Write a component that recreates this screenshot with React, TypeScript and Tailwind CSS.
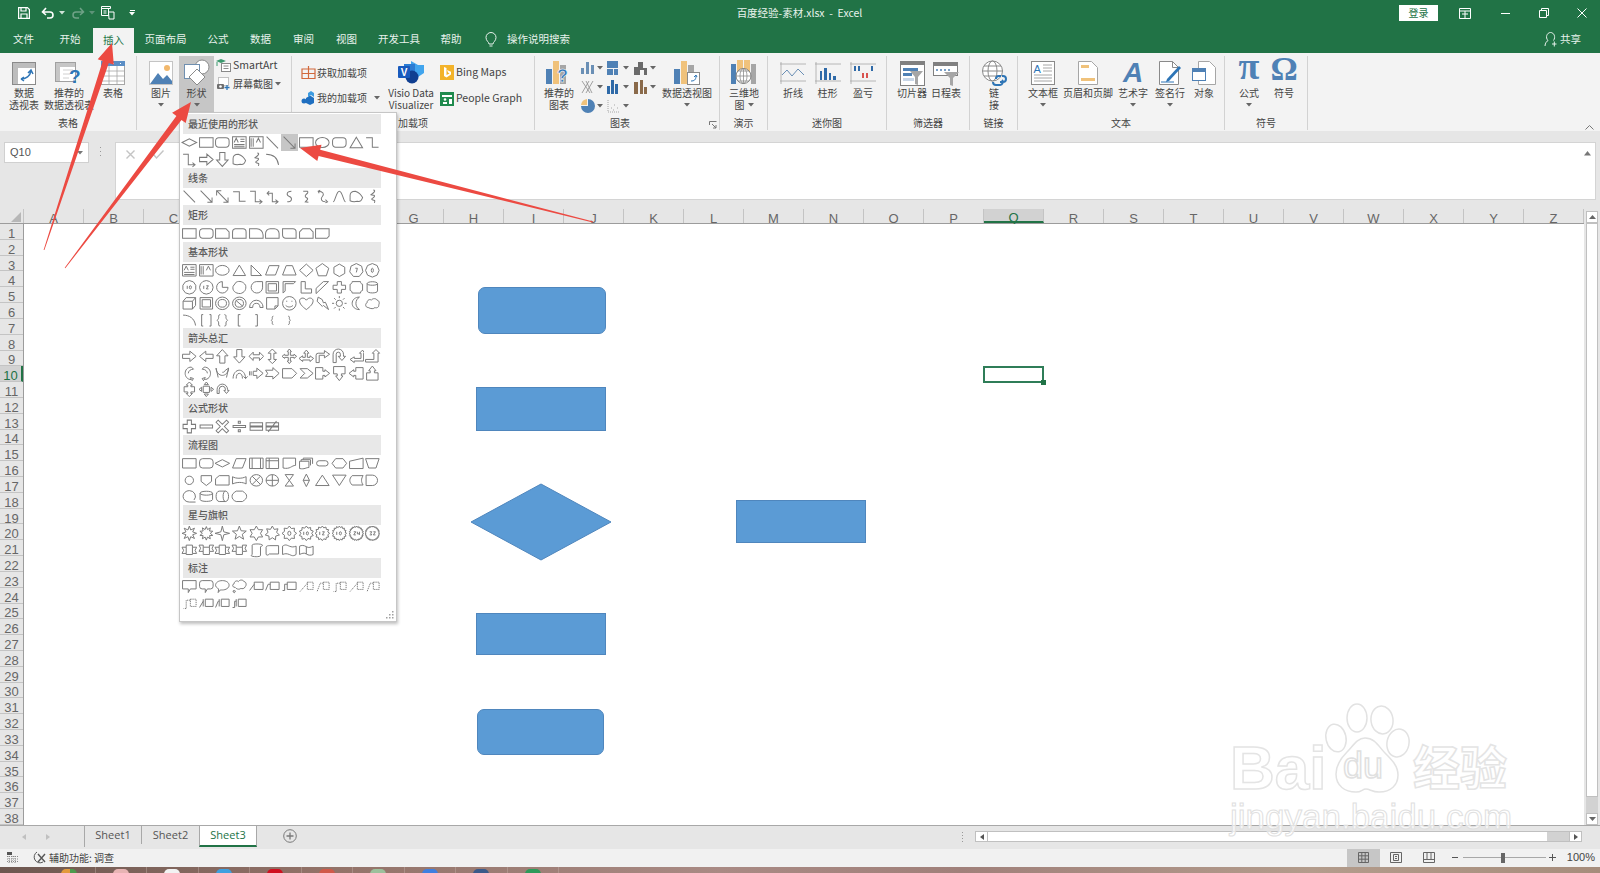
import React from 'react'

// ---- small helpers ----
const polar = (n: number, r1: number, r2: number) => {
  const pts: string[] = []
  const count = r1 === r2 ? n : n * 2
  for (let i = 0; i < count; i++) {
    const r = i % 2 === 0 ? r1 : r2
    const a = (i / count) * Math.PI * 2 - Math.PI / 2
    pts.push(`${(8 + Math.cos(a) * r).toFixed(2)} ${(8 + Math.sin(a) * r).toFixed(2)}`)
  }
  return 'M' + pts.join('L') + 'z'
}
const ring = 'M4 8a4 4 0 1 0 8 0a4 4 0 1 0-8 0z'

const P: Record<string, string> = {
  rect: 'M1.5 3.5h13v9h-13z',
  round: 'M4.5 3.5h7a3 3 0 0 1 3 3v3a3 3 0 0 1-3 3h-7a3 3 0 0 1-3-3v-3a3 3 0 0 1 3-3z',
  dia: 'M1 8l7-3.5L15 8l-7 3.5z',
  ell: 'M1.5 8a6.5 4.7 0 1 0 13 0a6.5 4.7 0 1 0-13 0z',
  tri: 'M8 3l6 10H2z',
  elbow: 'M2 3.5h6v9h6',
  elbowA: 'M2 3h5v10h6M11 11l2.5 2-2.5 2',
  elbowD: 'M3 5h5v8h5M11 11l2.5 2-2.5 2M5 3L3 5l2 2',
  line: 'M2.5 2.5l11 11',
  arrow: 'M2.5 2.5l11 11M13.5 9v4.5H9',
  dbl: 'M2.5 2.5l11 11M13.5 9v4.5H9M2.5 7V2.5H7',
  r: 'M1.5 6h7V3l6 5-6 5v-3h-7z',
  l: 'M14.5 6h-7V3l-6 5 6 5v-3h7z',
  u: 'M5.5 14.5v-7h-3L8 1.5l5.5 6h-3v7z',
  d: 'M5.5 1.5v7h-3l5.5 6 5.5-6h-3v-7z',
  lr: 'M1 8l4-4v2.5h6V4l4 4-4 4V9.500H5V12z',
  ud: 'M8 1l4 4H9.500v6H12l-4 4-4-4h2.500V5H4z',
  quad: 'M8 1l2 2.500H9V7h3.500V6L15 8l-2.500 2V9H9v3.500h1L8 15l-2-2.500h1V9H3.500v1L1 8l2.500-2v1H7V3.500H6z',
  lru: 'M8 2l2.500 3H9v4h2.500V7.500L15 10l-3.500 3v-1.500h-7V13L1 10l3.500-2.500V9H7V5H5.500z',
  bent: 'M2 14V7a2 2 0 0 1 2-2h6V2.500L15 6l-5 3.500V7H5v7z',
  uturn: 'M2 14V6a5 5 0 0 1 10 0v2h2l-3.500 4L7 8h2V6a2 2 0 0 0-4 0v8z',
  lu: 'M14 2l-3 3h1.500v5H6V8.500L2 11l4 3v-1.500h9V5H16z',
  bu: 'M1.500 11h8V5H8l3.500-3.500L15 5h-1.500v8.500h-12z',
  cr: 'M10 2C6 2 4 5 4 8s2 6 6 6l-1-2 3 1-2 3M10 2l2 2c-3 0-5 2-5 4',
  cl: 'M6 2c4 0 6 3 6 6s-2 6-6 6l1-2-3 1 2 3M6 2L4 4c3 0 5 2 5 4',
  cu: 'M2 3c0 4 3 7 6 7s6-3 6-7l-3 2c-1 2-2 2-3 2M2 3l2 9M14 3l-2 9',
  cd: 'M2 13c0-5 3-8 6-8s6 3 6 8l2-2M14 13l-2-2M5 13c0-3 1-5 3-5s3 2 3 5',
  str: 'M1.5 6v4M3 6v4M5 6h3.500V3l6 5-6 5v-3H5z',
  notch: 'M1.500 5h7V2.500l6 5.500-6 5.500V11h-7l2-3z',
  home: 'M1.500 3.500h9L15 8l-4.500 4.500h-9z',
  chev: 'M2 3.500h7L14.500 8 9 12.500H2L6.500 8z',
  cbr: 'M1.500 2.500h7v3.500h2V4.500L15 8l-4.500 3.500V10h-2v3.500h-7z',
  cbd: 'M2.500 1.500h11v7H10v2h1.500L8 15l-3.500-4.500H6v-2H2.500z',
  cbl: 'M14.500 2.500h-7v3.500h-2V4.500L1 8l4.500 3.500V10h2v3.500h7z',
  cbu: 'M2.500 14.500h11v-7H10v-2h1.500L8 1 4.500 5.500H6v2H2.500z',
  udc: 'M8 1l3 3H9.500v1.500H13v5H9.500V12H11l-3 3-3-3h1.500v-1.500H3v-5h3.500V4H5z',
  qc: 'M5 5h6v6H5zM8 1l2 2.500H6zM8 15l2-2.500H6zM1 8l2.500-2v4zM15 8l-2.500-2v4z',
  circ: 'M3 12V8a5 5 0 0 1 10 0v1h1.500L12 12 9.500 9H11V8a3 3 0 0 0-6 0v4z',
  plus: 'M6 2h4v4h4v4h-4v4H6v-4H2V6h4z',
  minus: 'M2 6.500h12v3H2z',
  times: 'M4 2l4 4 4-4 2 2-4 4 4 4-2 2-4-4-4 4-2-2 4-4-4-4z',
  div: 'M2 7h12v2H2zM7 3h2v2H7zM7 11h2v2H7z',
  eq: 'M2 4.500h12v3H2zM2 8.500h12v3H2z',
  neq: 'M2 4.500h12v3H2zM2 8.500h12v3H2zM4 13L12 3',
  tb: 'M1.500 2.500h13v11h-13zM3 8l2-4 2 4M9 5h4M9 7h4M3 10h10M3 12h10',
  vtb: 'M1.500 2.500h13v11h-13zM3 4v8M5 4v8M8 8l2-4 2 4',
  rtTri: 'M3 3l10 10H3z',
  para: 'M5 3.500h9.500L11 12.500H1.500z',
  trap: 'M5 3.500h6l3.500 9h-13z',
  ddia: 'M8 2l6.500 6L8 14 1.500 8z',
  pie: 'M8 2.500a5.500 5.500 0 1 0 5.500 5.500H8z',
  chord: 'M5 3c3-1.500 7-.5 9 3 1 4-1 7-5 8-5 0-8-3-7-7z',
  tear: 'M14 2.500H8a5.500 5.500 0 1 0 6 6z',
  frame: 'M2 2.500h12v11H2zM4 4.500h8v7H4z',
  hf: 'M2 2.500h12l-2 2H4v7l-2 2z',
  ls: 'M3 2.500h4v7h6v4H3z',
  diag: 'M2 9l7-6.500h5L2 14z',
  cross: 'M6 2.500h4V6h4v4h-4v3.500H6V10H2V6h4z',
  plaque: 'M4 2.500h8c0 1.500 1 2.500 2 2.500v6c-1 0-2 1-2 2.500H4c0-1.500-1-2.500-2-2.500V5c1 0 2-1 2-2.500z',
  can: 'M3 4.500c0-2.500 10-2.500 10 0v7c0 2.500-10 2.500-10 0zM3 4.500c0 2 10 2 10 0',
  cube: 'M2 6l3-3.500h9V10l-3 3.500H2zM2 6h9v7.500M11 6l3-3.500',
  bevel: 'M2 2.500h12v11H2zM4 4.500h8v7H4z',
  donut: 'M1.500 8a6.500 6 0 1 0 13 0a6.500 6 0 1 0-13 0zM4 8a4 3.700 0 1 0 8 0a4 3.700 0 1 0-8 0z',
  no: 'M1.500 8a6.500 6 0 1 0 13 0a6.500 6 0 1 0-13 0zM4 8a4 3.700 0 1 0 8 0a4 3.700 0 1 0-8 0zM4.500 5l7 6',
  arcB: 'M1.500 12a6.500 7 0 0 1 13 0h-3a3.500 4 0 0 0-7 0z',
  fold: 'M2.500 2.500h11v8l-3 3h-8zM10.500 13.500v-3h3',
  smile: 'M1.500 8a6.500 6.500 0 1 0 13 0a6.500 6.500 0 1 0-13 0zM5 6h1M10 6h1M4.500 10c2 2 5 2 7 0',
  heart: 'M8 14C4 11 1.500 8.500 1.500 5.500 1.500 3 5.500 1.500 8 5c2.500-3.500 6.500-2 6.500.5 0 3-2.500 5.500-6.500 8.500z',
  bolt: 'M4 2l4 2.500 1 3 2-.5 3 7-5-4-1 1-5-5z',
  sun: 'M5 8a3 3 0 1 0 6 0a3 3 0 1 0-6 0zM8 1v2M8 13v2M1 8h2M13 8h2M3 3l1.500 1.500M11.500 11.500L13 13M13 3l-1.500 1.500M3 13l1.500-1.500',
  moon: 'M11 2a7 7 0 0 0 0 12C7 14 4 11.500 4 8s3-6 7-6z',
  cloud: 'M4 12c-3 0-3-4-1-4.500C2.500 5 6 3.500 7 5c1-2 5-2 5.500 0 2.500 0 2.500 4 1.500 4.500 1 2-2 3.500-3.500 2.500-1 1.500-4 1.500-6.500 0z',
  arc: 'M2 3c6 0 11 3 12 10',
  bp: 'M5 2.500H3.500v11H5M11 2.500h1.500v11H11',
  bcp: 'M6 2.500c-2 0-1.500 2-1.500 3S3 8 3 8s1.500 1 1.500 2.500-.5 3 1.500 3M10 2.500c2 0 1.500 2 1.500 3S13 8 13 8s-1.500 1-1.500 2.500.5 3-1.500 3',
  lb: 'M9 2.500H7v11h2',
  rb: 'M7 2.500h2v11H7',
  lbc: 'M9 4c-1.500 0-1 2-1 2.500S7 8 7 8s1 .5 1 1.500S7.500 12 9 12',
  rbc: 'M7 4c1.500 0 1 2 1 2.500S9 8 9 8s-1 .5-1 1.500S8.500 12 7 12',
  sc: 'M10 3C5 3 5 7 8 8s3 5-2 5',
  scA: 'M5 3h4c2 2-3 3-2 5s3 1 2 3l-2 2M9 11l-2 2 3 .5',
  scD: 'M5 5L4 3l2-1M4 3c5 0 6 3 4 5s-1 5 3 5M11 11l2 2-2 1',
  bump: 'M2 13c2 0 3-10 6-10s4 10 6 10',
  free: 'M2 12V7c0-3 2-4 5-4 3 1 5 2 7 6-1 3-3 4-5 3.500-2 .5-5 .5-7-.5z',
  scrib: 'M9 2c3 0 0 3-2 4s4 0 3 2-4 2-2 3 3 0 2 3',
  s1: 'M1.500 3.500h10l3 3v6h-13z',
  s2: 'M4 3.500h7.500a3 3 0 0 1 3 3v6h-13v-6a3 3 0 0 1 2.500-3z',
  s3: 'M1.500 3.500h7a6 6 0 0 1 6 6v3h-13z',
  s4: 'M6 3.500h4a4.500 4.500 0 0 1 4.500 4.500v4.500h-13V8A4.500 4.500 0 0 1 6 3.500z',
  s5: 'M1.500 3.500h10a3 3 0 0 1 3 3v6h-10a3 3 0 0 1-3-3z',
  s6: 'M4.500 3.500h7l3 3v6h-13v-6z',
  s7: 'M1.500 3.500h13v7l-2 2h-11z',
  fPre: 'M1.500 3h13v10h-13zM4 3v10M12 3v10',
  fInt: 'M2 3h12v10H2zM5 3v10M2 5.500h12',
  fDoc: 'M2 3h12v7c-4 0-5 4-12 2.500z',
  fMul: 'M1.500 6h9v6c-3 0-4 2-9 1zM3 6V4.500h9V10M5 4.500V3h9v5.500',
  fTerm: 'M5 5.500h6a2.500 2.500 0 0 1 0 5H5a2.500 2.500 0 0 1 0-5z',
  fPrep: 'M4.500 3.500h7L15 8l-3.500 4.500h-7L1 8z',
  fManI: 'M1.500 6l13-3v10h-13z',
  fManO: 'M1.500 3.500h13l-3 9h-7z',
  fConn: ring,
  fOff: 'M3 3.500h10v5.500L8 13 3 9z',
  fCard: 'M5 3.500h9.500v9h-13v-6z',
  fTape: 'M1.500 4.500c3 2 9 2 13 0v7c-3-2-9-2-13 0z',
  fSum: 'M2 8a6 5.500 0 1 0 12 0a6 5.500 0 1 0-12 0zM4 4l8 8M12 4l-8 8',
  fOr: 'M2 8a6 5.500 0 1 0 12 0a6 5.500 0 1 0-12 0zM8 2.500v11M2 8h12',
  fCol: 'M4 2.500h8L4 13.500h8z',
  fSort: 'M8 2l3 6-3 6-3-6zM5 8h6',
  fExt: 'M8 3l6.500 10h-13z',
  fMrg: 'M1.500 3h13L8 13z',
  fStore: 'M4 3.500h10.500c-2 3-2 6 0 9H4c-3-3-3-6 0-9z',
  fDelay: 'M2 3h6a5 5 0 0 1 0 10H2z',
  fSeq: 'M8 2.500a6 5.500 0 1 0 0 11h6M8 2.500a6 5.500 0 0 1 4.500 9',
  fMag: 'M2 5c0-2.500 12-2.500 12 0v6c0 2.500-12 2.500-12 0zM2 5c0 2.500 12 2.500 12 0',
  fDir: 'M5 3c-4 0-4 10 0 10h6c4 0 4-10 0-10zM11 3c-3 0-3 10 0 10',
  fDisp: 'M5 3h6c3 2 4 3 4 5s-1 3-4 5H5C2 12 1 10 1 8s1-3 4-5z',
  rib1: 'M1 5h4V3h6v2h4l-1.500 3L15 11h-4v1H5v-1H1l1.500-3zM5 5v6M11 5v6',
  rib2: 'M1 3h4v2h6V3h4l-1.500 3L15 9h-4v3H5V9H1l1.500-3zM5 5v4M11 5v4',
  scrollV: 'M4 3c0-1.500 9-1.500 10 0 0 1-2 1.500-2 1.500V13c0 1.500-8 1.500-9 0 0-.5 1-1 1-1z',
  scrollH: 'M2 5c0-1.500 3-1.500 3-1.500h9v8H5c-1 1.500-3 1.500-3 0z',
  wave: 'M1.500 4c3-2 4-1 6.500 0s4 1 6.500 0v8c-3 2-4 1-6.500 0s-4-1-6.500 0z',
  wave2: 'M1.500 4c2-1 4-1 6.500.5S12.500 5 14.500 4v8c-2 1-4.500 1-6.500-.5s-4.500-.5-6.500.5zM8 4.500v7',
  cR: 'M1.500 2.500h13v8H9L7 14v-3.500H1.500z',
  cRo: 'M4 2.500h8a2.500 2.500 0 0 1 2.500 2.500v3a2.500 2.500 0 0 1-2.500 2.500H9L7 14v-3.500H4A2.500 2.500 0 0 1 1.500 8V5A2.500 2.500 0 0 1 4 2.500z',
  cO: 'M8 2.500c4 0 6.500 2 6.500 4.500s-3 4.500-6.500 4.500c-1 0-1 0-2 0L4 14l.500-3.500C2.500 9.500 1.500 8 1.500 7c0-2.500 2.500-4.500 6.500-4.500z',
  cC: 'M4 9c-3 0-3-3-1-3.500C3 3 6 2 7 3.500c1-2 5-2 5.500 0 2.500 0 2.500 4 1 5-.5 2-3 2-4 1.500-1 1-3 1-4.500 0zM3 12a1 1 0 1 0 .1 0z',
  cL1: 'M6 4h8.500v7H6zM6 6L1.500 12',
  cL2: 'M6 4h8.500v7H6zM6 6H4L1.500 12',
  cL3: 'M6 4h8.500v7H6zM6 6H3.500v6H1.500',
  cD1: 'M9 4h5.500v7H9zM9 5L2 13',
  cD2: 'M9 4h5.500v7H9zM9 5H6l-3 8',
  cD3: 'M9 4h5.500v7H9zM9 5H5v8H2.500',
  bA1: 'M7 4h7.500v7H7zM5 4v7M5 6L1.500 12',
  bA2: 'M7 4h7.500v7H7zM5 4v7M5 6H4L1.500 12',
  bA3: 'M7 4h7.500v7H7zM5 4v7M5 6H3.500v6H1.500',
}

const dashed = new Set(['cD1', 'cD2', 'cD3'])

const star = (n: number, r1: number, r2: number) => polar(n, r1, r2)
const extra: Record<string, string> = {
  p5: polar(5, 6.5, 6.5),
  h6: polar(6, 6, 6),
  o7: polar(7, 6.5, 6.5) + 'M7 6h2l-1 4',
  o8: polar(8, 6.5, 6.5) + 'M7 8a1 2 0 1 0 2 0a1 2 0 1 0-2 0',
  o10: polar(10, 6.5, 6.5) + 'M6 6.500v3M8 8a1 1.500 0 1 0 2 0a1 1.500 0 1 0-2 0',
  o12: polar(12, 6.5, 6.5) + 'M5.500 6.500v3M8 6.500h2l-2 3h2',
  st4x: star(8, 7, 3.5),
  st4y: star(10, 6.5, 3.8),
  st4: star(4, 7, 2),
  st5: star(5, 7, 3),
  st6: star(6, 7, 4),
  st7: star(7, 7, 4.2),
  st8: star(8, 7, 5) + 'M6.500 8a1.500 2 0 1 0 3 0a1.500 2 0 1 0-3 0',
  st10: star(10, 7, 5.2) + 'M5.500 6.500v3M8 8a1 1.500 0 1 0 2 0a1 1.500 0 1 0-2 0',
  st12: star(12, 7, 5.4) + 'M5.500 6.500v3M8 6.500h2l-2 3h2',
  st16: star(16, 7, 5.6) + 'M5.500 6.500v3M8 8a1 1.500 0 1 0 2 0a1 1.500 0 1 0-2 0',
  st24: star(24, 7, 5.8) + 'M5.500 6.500h2l-2 3h2M9 6.500v2h2M11 6.500v3',
  st32: star(32, 7, 6) + 'M5.500 6.500h2l-1 1.500 1 1.500h-2M9 6.500h2l-2 3h2',
}
Object.assign(P, extra)

function ShapeIcon({ name }: { name: string }) {
  return (
    <svg viewBox="0 0 16 16" className="h-full w-full" fill="none" preserveAspectRatio="none">
      <path
        d={P[name]}
        stroke="#7a7a7a"
        strokeWidth="0.95"
        strokeDasharray={dashed.has(name) ? '1.2 0.8' : undefined}
      />
    </svg>
  )
}

function ShapeSection({ title, rows, cls, active }: { title: string; rows: string; cls: string; active?: number }) {
  return (
    <div className={`flex flex-col ${cls}`}>
      <div className="ml-[3px] flex h-5 w-[198px] shrink-0 items-center bg-[#e8e8e8] pl-[5px] text-[10px] leading-none font-medium text-[#5a5a5a]">
        {title}
      </div>
      <div className="ml-px grid flex-1 auto-rows-fr grid-cols-[repeat(12,16.67px)]">
        {rows.split(' ').map((name, i) => (
          <div key={i} className={i === active ? 'bg-[#c6c6c6]' : ''}>
            <ShapeIcon name={name} />
          </div>
        ))}
      </div>
    </div>
  )
}

function Caret({ color = '#666' }: { color?: string }) {
  return (
    <svg width="6" height="4" viewBox="0 0 6 4" className="shrink-0">
      <path d="M0 0h6L3 3.500z" fill={color} />
    </svg>
  )
}

// ---- ribbon icons ----
function IcoPivot() {
  return (
    <svg width="26" height="25" viewBox="0 0 26 25">
      <rect x="1.500" y="1.500" width="23" height="22" fill="#fff" stroke="#8a8a8a" />
      <rect x="2" y="2" width="22" height="5" fill="#bdbdbd" />
      <rect x="2" y="7" width="5" height="16" fill="#bdbdbd" />
      <path d="M10 18c5 0 9-3 10-8M17 12l3-3 2 4M10 18l3-2M10 18l3 2" stroke="#2e75b6" strokeWidth="1.500" fill="none" />
    </svg>
  )
}
function IcoRecPivot() {
  return (
    <svg width="30" height="25" viewBox="0 0 30 25">
      <rect x="1.500" y="1.500" width="20" height="19" fill="#fff" stroke="#a0a0a0" />
      <rect x="2" y="2" width="19" height="4" fill="#c6c6c6" />
      <rect x="2" y="6" width="4" height="14" fill="#c6c6c6" />
      <path d="M9 9h10M9 13h7M9 17h6" stroke="#d0d0d0" />
      <text x="15" y="22" fontFamily="Liberation Sans" fontWeight="700" fontSize="19" fill="#2e75b6">?</text>
    </svg>
  )
}
function IcoTable() {
  return (
    <svg width="24" height="25" viewBox="0 0 24 25">
      <rect x="0.500" y="0.500" width="23" height="23" fill="#fff" stroke="#a6a6a6" />
      <rect x="0" y="0" width="24" height="5" fill="#5b8ec5" />
      <path d="M0 10h24M0 15h24M0 20h24M8 5v19M16 5v19" stroke="#a6a6a6" strokeWidth="0.800" />
      <path d="M5 2.500h1M12 2.500h1M19 2.500h1" stroke="#fff" />
    </svg>
  )
}
function IcoPicture() {
  return (
    <svg width="24" height="24" viewBox="0 0 24 24">
      <rect x="0.500" y="0.500" width="23" height="23" fill="#fff" stroke="#c4c4c4" />
      <circle cx="18" cy="7" r="3" fill="#f2b86c" />
      <path d="M1 23l8-11 5 6 4-4 5 6v3z" fill="#4f81b5" />
    </svg>
  )
}
function IcoShapes() {
  return (
    <svg width="28" height="28" viewBox="0 0 28 28">
      <circle cx="19" cy="8" r="7" fill="#fff" stroke="#8a8a8a" />
      <rect x="1.500" y="5.500" width="15" height="14" fill="#fff" stroke="#6f8fb0" />
      <path d="M14 10l8 8-8 8-8-8z" fill="#fff" stroke="#8a8a8a" />
    </svg>
  )
}
function IcoSmartArt() {
  return (
    <svg width="15" height="15" viewBox="0 0 15 15">
      <path d="M0 3l5-2 5 2-5 2z" fill="#3c9a6f" />
      <path d="M1 4v4" stroke="#3c9a6f" />
      <rect x="5.500" y="5.500" width="9" height="8" fill="#fff" stroke="#8a8a8a" />
      <path d="M7.500 8h5M7.500 10.500h5" stroke="#8a8a8a" />
    </svg>
  )
}
function IcoShot() {
  return (
    <svg width="15" height="15" viewBox="0 0 15 15">
      <rect x="2.500" y="1.500" width="10" height="8" fill="#fff" stroke="#8a8a8a" strokeDasharray="1 1" />
      <rect x="1" y="8" width="7" height="5" rx="1" fill="#6e6e6e" />
      <circle cx="4.500" cy="10.500" r="1.300" fill="#fff" />
      <path d="M11 9v5M8.500 11.500h5" stroke="#2e75b6" strokeWidth="1.300" />
    </svg>
  )
}
function IcoGetAddin() {
  return (
    <svg width="15" height="15" viewBox="0 0 15 15" fill="none" stroke="#d2693c" strokeWidth="1.200">
      <path d="M1 4h13v9.500H1zM1 8.500h13M7.500 1v12.500" />
    </svg>
  )
}
function IcoMyAddin() {
  return (
    <svg width="15" height="15" viewBox="0 0 15 15">
      <path d="M5 8l4-2.500 4 2.500v5l-4 2-4-2z" fill="#1f6fc0" />
      <path d="M7 3l3-2 3 2v4l-3-2-3 2z" fill="#3d9be0" />
      <circle cx="3" cy="11" r="2.500" fill="#1f6fc0" />
    </svg>
  )
}
function IcoVisio() {
  return (
    <svg width="26" height="24" viewBox="0 0 26 24">
      <path d="M13 0l7 4 6 0v8l-6 4-7-4z" fill="#41a5ee" />
      <path d="M6 3h11v14H6z" fill="#2b7cd3" />
      <circle cx="14" cy="16" r="6.500" fill="#103f91" />
      <rect x="0" y="5" width="12" height="12" rx="1" fill="#185abd" />
      <text x="6" y="15" textAnchor="middle" fontFamily="Liberation Sans" fontWeight="700" fontSize="10" fill="#fff">V</text>
    </svg>
  )
}
function IcoBing() {
  return (
    <svg width="14" height="15" viewBox="0 0 14 15">
      <rect width="14" height="15" fill="#f3b32a" />
      <path d="M4 2l2.500 1v7l3-1.500-1.500-1L7 5l4 1.800v2.700L6.500 12.500 4 11z" fill="#fff" />
    </svg>
  )
}
function IcoPeople() {
  return (
    <svg width="14" height="14" viewBox="0 0 14 14">
      <rect width="14" height="14" fill="#1f8a4d" />
      <path d="M2 3h10v2H2z" fill="#fff" />
      <circle cx="5" cy="7.500" r="1.300" fill="#fff" />
      <path d="M3 12V10h4v2zM9 7h3v5H9z" fill="#fff" />
    </svg>
  )
}
function IcoRecChart() {
  return (
    <svg width="26" height="26" viewBox="0 0 26 26">
      <rect x="0" y="9" width="6" height="15" fill="#4f81b5" />
      <rect x="7" y="1" width="6" height="23" fill="#f0c27b" />
      <rect x="14" y="5" width="6" height="19" fill="#a6a6a6" />
      <text x="11" y="22" fontFamily="Liberation Sans" fontWeight="700" fontSize="18" fill="#2e75b6" stroke="#fff" strokeWidth="0.500">?</text>
    </svg>
  )
}
function IcoPivotChart() {
  return (
    <svg width="26" height="26" viewBox="0 0 26 26">
      <rect x="0" y="9" width="6" height="15" fill="#4f81b5" />
      <rect x="7" y="1" width="6" height="23" fill="#f0c27b" />
      <rect x="14" y="5" width="6" height="19" fill="#a6a6a6" />
      <rect x="13.500" y="12.500" width="12" height="12" fill="#fff" stroke="#8a8a8a" />
      <path d="M17 21c3 0 5-1 5-5M20 17l2-2 1 2" stroke="#2e75b6" fill="none" />
    </svg>
  )
}
function Ico3D() {
  return (
    <svg width="26" height="26" viewBox="0 0 26 26">
      <rect x="0" y="4" width="5" height="20" fill="#4f81b5" />
      <rect x="6" y="0" width="6" height="14" fill="#f0c27b" />
      <rect x="13" y="0" width="6" height="14" fill="#f0c27b" />
      <rect x="20" y="4" width="5" height="20" fill="#a6a6a6" />
      <circle cx="12.500" cy="16" r="7.500" fill="#fff" stroke="#808080" />
      <path d="M5 16h15M12.500 8.500v15M7 11h11M7 21h11" stroke="#808080" strokeWidth="0.700" />
      <ellipse cx="12.500" cy="16" rx="3.500" ry="7.500" fill="none" stroke="#808080" strokeWidth="0.700" />
    </svg>
  )
}
function IcoSpark({ kind }: { kind: 'line' | 'col' | 'win' }) {
  return (
    <svg width="26" height="22" viewBox="0 0 26 22">
      <path d="M1 0v22M0 2h26M0 19h26" stroke="#a6a6a6" strokeWidth="0.800" />
      {kind === 'line' && <path d="M2 13l5-5 5 6 6-7 6 6" stroke="#6a8fb5" fill="none" />}
      {kind === 'col' && <path d="M5 18V9h2v9zM9 18V6h3v12zM14 18v-7h2v7zM18 18v-4h3v4z" fill="#2f6aa8" />}
      {kind === 'win' && (
        <>
          <path d="M4 4h2v5H4zM8 4h2v5H8zM21 4h2v5h-2z" fill="#2f6aa8" />
          <path d="M12 11h2v5h-2zM16 11h2v5h-2z" fill="#d9534f" />
        </>
      )}
    </svg>
  )
}
function IcoSlicer() {
  return (
    <svg width="25" height="25" viewBox="0 0 25 25">
      <rect x="0.500" y="0.500" width="24" height="24" fill="#fff" stroke="#808080" />
      <rect x="0" y="0" width="25" height="4" fill="#808080" />
      <rect x="3" y="7" width="15" height="3" fill="#4f81b5" />
      <rect x="3" y="12" width="9" height="3" fill="#4f81b5" />
      <rect x="3" y="17" width="11" height="3" fill="#c9d7e8" />
      <path d="M10 10h13l-5 6v8l-3-1v-7z" fill="#a6a6a6" />
    </svg>
  )
}
function IcoTimeline() {
  return (
    <svg width="27" height="25" viewBox="0 0 27 25">
      <rect x="0.500" y="1.500" width="24" height="13" fill="#fff" stroke="#808080" />
      <rect x="0" y="1" width="25" height="4" fill="#808080" />
      <path d="M3 9h2M7 9h2M11 9h2M15 9h2" stroke="#4f81b5" strokeWidth="1.500" />
      <path d="M11 11h15l-6 6v8l-3-1v-7z" fill="#a6a6a6" />
    </svg>
  )
}
function IcoLink() {
  return (
    <svg width="26" height="27" viewBox="0 0 26 27">
      <circle cx="11.500" cy="11" r="10" fill="#fff" stroke="#8a8a8a" />
      <ellipse cx="11.500" cy="11" rx="4.500" ry="10" fill="none" stroke="#8a8a8a" />
      <path d="M1.500 11h20M3 6h17M3 16h17" stroke="#8a8a8a" />
      <path d="M15 19a3 3 0 0 1 3-3h2M21 16h1a3 3 0 0 1 0 6h-3M12 22a3 3 0 0 0 3 3h4a3 3 0 0 0 2-5" stroke="#2e75b6" strokeWidth="2" fill="none" />
    </svg>
  )
}
function IcoTextbox() {
  return (
    <svg width="24" height="24" viewBox="0 0 24 24">
      <rect x="0.500" y="0.500" width="23" height="23" fill="#fff" stroke="#8a8a8a" />
      <text x="2.500" y="12" fontFamily="Liberation Sans" fontSize="11" fill="#2e75b6">A</text>
      <path d="M12 4h9M12 7h9M12 10h9M3 14h18M3 17h18M3 20h18" stroke="#a6a6a6" />
    </svg>
  )
}
function IcoHeader() {
  return (
    <svg width="20" height="24" viewBox="0 0 20 24">
      <path d="M.5.5h13l6 6v17H.5z" fill="#fff" stroke="#a6a6a6" />
      <rect x="3" y="4" width="8" height="3" fill="#f0c27b" />
      <rect x="3" y="17" width="14" height="3" fill="#f0c27b" />
    </svg>
  )
}
function IcoWordArt() {
  return (
    <div className="flex h-6 w-6 items-center justify-center font-['Liberation_Sans',sans-serif] text-[28px] leading-6 font-bold text-[#4f81b5] italic">
      A
    </div>
  )
}
function IcoSign() {
  return (
    <svg width="24" height="25" viewBox="0 0 24 25">
      <path d="M1.500.5h13l6 6v17h-19z" fill="#fff" stroke="#8a8a8a" />
      <path d="M14.500.5v6h6" fill="none" stroke="#8a8a8a" />
      <path d="M9 18L21 5l2 2-12 13-3 1z" fill="#2e75b6" />
      <path d="M3 21h13" stroke="#2e75b6" />
    </svg>
  )
}
function IcoObject() {
  return (
    <svg width="24" height="24" viewBox="0 0 24 24">
      <path d="M6.500.5h11l6 6v17h-17z" fill="#fff" stroke="#a6a6a6" />
      <rect x="0.500" y="7.500" width="13" height="12" fill="#fff" stroke="#4f81b5" />
      <rect x="0" y="7" width="14" height="4" fill="#4f81b5" />
    </svg>
  )
}
function MiniChart({ kind }: { kind: number }) {
  const parts: Record<number, React.ReactNode> = {
    0: <path d="M0 13V7h3v6zM5 13V1h3v12zM10 13V4h3v9z" fill="#6a8fb5" />,
    1: <path d="M0 0h11v7H0z M0 8h6v6H0z M7 8h4v6H7z" fill="#4f81b5" />,
    2: <path d="M0 14V6h4V1h5v6h4v7h-3V9H6v5z" fill="#6a6a6a" />,
    3: <path d="M1 1l8 12M8 1L1 13M5 1l6 12M12 1L5 13" stroke="#8a8a8a" fill="none" strokeWidth="0.800" />,
    4: <path d="M0 14V6h3v8zM4 14V0h3v14zM8 14V4h3v10z" fill="#2f6aa8" />,
    5: <path d="M0 14V2h4v12zM6 14V0h3v14zM10 14V7h3v7z" fill="#8a6a4a" />,
    6: <path d="M7 0a7 7 0 1 1-7 7h7z" fill="#4f81b5" />,
    7: <path d="M1 1v12h12M4 9h1M7 6h1M10 9h1M6 11h1" stroke="#a6a6a6" fill="none" strokeDasharray="1 1" />,
  }
  return (
    <svg width="14" height="14" viewBox="0 0 14 14" className="shrink-0">
      {kind === 6 && <path d="M6 6V0a7 7 0 0 0-6 6z" fill="#f0c27b" />}
      {parts[kind]}
    </svg>
  )
}

function RibbonBtn({
  width,
  icon,
  lines,
  caret,
  active,
  inlineCaret,
}: {
  width: string
  icon: React.ReactNode
  lines: string[]
  caret?: boolean
  active?: boolean
  inlineCaret?: boolean
}) {
  return (
    <div className={`flex h-[57px] shrink-0 flex-col items-center pt-[3px] ${width} ${active ? 'bg-[#c6c6c6]' : ''}`}>
      <div className="flex h-[28px] items-center justify-center">{icon}</div>
      {lines.map((t, i) => (
        <div key={i} className="flex h-3 items-center gap-[3px] leading-3 whitespace-nowrap">
          {t}
          {inlineCaret && i === lines.length - 1 && <Caret />}
        </div>
      ))}
      {caret && (
        <div className="flex h-3 items-center">
          <Caret />
        </div>
      )}
    </div>
  )
}

function Group({
  width,
  label,
  children,
  pad,
  labelCls,
  launcher,
}: {
  width: string
  label: string
  children: React.ReactNode
  pad?: string
  labelCls?: string
  launcher?: boolean
}) {
  return (
    <div className={`relative flex h-[74px] shrink-0 flex-col border-r border-[#d2d2d2] ${width}`}>
      <div className={`flex h-[57px] ${pad ?? ''}`}>{children}</div>
      <div className={`mt-1 text-center leading-3 ${labelCls ?? ''}`}>{label}</div>
      {launcher && (
        <svg width="8" height="8" viewBox="0 0 8 8" fill="none" stroke="#777" className="absolute right-[2px] bottom-[1px]">
          <path d="M.5 4V.5H7.500M3 3l4 4M7 4v3H4" />
        </svg>
      )}
    </div>
  )
}

const tabs = [
  ['文件', 'w-[47px]'],
  ['开始', 'w-[46px]'],
  ['插入', 'w-[41px]'],
  ['页面布局', 'w-[63px]'],
  ['公式', 'w-[42px]'],
  ['数据', 'w-[43px]'],
  ['审阅', 'w-[43px]'],
  ['视图', 'w-[43px]'],
  ['开发工具', 'w-[62px]'],
  ['帮助', 'w-[42px]'],
]

const columns = 'ABCDEFGHIJKLMNOPQRSTUVWXYZ'.split('')
const rowNums = Array.from({ length: 38 }, (_, i) => i + 1)

const taskIcons = [
  'linear-gradient(90deg,#e39a3c 55%,#4c9a4c 55%)',
  '#e8b4b4',
  '#f2f2f2',
  '#3fa0e0',
  '#d01020',
  '#d05a4a',
  '#9cc09c',
  '#3f7fe0',
  '#3b5a8a',
  '#2d9a5a',
]

function arrowPoints(tx: number, ty: number, hx: number, hy: number) {
  const len = Math.hypot(hx - tx, hy - ty)
  const ux = (hx - tx) / len
  const uy = (hy - ty) / len
  const nx = -uy
  const ny = ux
  const bx = hx - ux * 20
  const by = hy - uy * 20
  const pts = [
    [tx + nx * 0.4, ty + ny * 0.4],
    [bx + nx * 3.2, by + ny * 3.2],
    [bx + nx * 8.5, by + ny * 8.5],
    [hx, hy],
    [bx - nx * 8.5, by - ny * 8.5],
    [bx - nx * 3.2, by - ny * 3.2],
    [tx - nx * 0.4, ty - ny * 0.4],
  ]
  return pts.map((p) => `${p[0].toFixed(1)},${p[1].toFixed(1)}`).join(' ')
}

export default function App() {
  return (
    <div className="relative flex h-[873px] w-[1600px] flex-col overflow-hidden bg-[#e6e6e6] font-['Noto_Sans_CJK_SC',sans-serif] text-[10px] text-[#444]">
      {/* Title bar */}
      <div className="relative flex h-[26px] shrink-0 items-center bg-[#217346] text-[#e8f2ec]">
        <div className="flex w-[145px] items-center pl-[18px]">
          <svg width="12" height="12" viewBox="0 0 12 12" fill="none" stroke="#fff" strokeWidth="1.200">
            <path d="M.6.6h8.800l2 2v8.800H.6zM3 .6v3.400h5V.6M3 11.400V7h6v4.400" />
          </svg>
          <svg width="14" height="12" viewBox="0 0 14 12" className="ml-[11px]" fill="none" stroke="#fff" strokeWidth="1.600">
            <path d="M2 5h7a3 3 0 0 1 0 6H6M5 1L1.500 5 5 8" />
          </svg>
          <div className="ml-1">
            <Caret color="#cfe3d7" />
          </div>
          <svg width="14" height="12" viewBox="0 0 14 12" className="ml-[6px]" fill="none" stroke="#6fa287" strokeWidth="1.500">
            <path d="M12 5H5a3 3 0 0 0 0 6h3M9 1l3.500 4L9 8" />
          </svg>
          <div className="ml-1">
            <Caret color="#5d9378" />
          </div>
          <svg width="14" height="14" viewBox="0 0 14 14" className="ml-[6px]" fill="none" stroke="#fff" strokeWidth="1">
            <path d="M.5.5h9v2h-9zM.5 2.500h7v7h-7zM2.500 5h3M2.500 7h3M7.500 6h5.500v7h-5z" />
          </svg>
          <div className="ml-[14px] flex flex-col items-center gap-px">
            <div className="h-px w-[5px] bg-white" />
            <Caret color="#fff" />
          </div>
        </div>
        <div className="flex-1 pr-[3px] text-center text-[10.500px] leading-none">
          <span className="ml-[58px]">百度经验-素材.xlsx&nbsp;&nbsp;-&nbsp;&nbsp;Excel</span>
        </div>
        <div className="flex items-center pr-[13px]">
          <div className="flex h-4 w-[39px] items-center justify-center bg-white text-[10px] leading-none text-[#217346]">登录</div>
          <svg width="12" height="11" viewBox="0 0 12 11" className="ml-[21px]" fill="none" stroke="#fff">
            <path d="M.5.5h11v10H.5zM.5 3h11M6 3v7.500M3 6h6" />
          </svg>
          <div className="ml-[30px] h-px w-[9px] bg-white" />
          <svg width="10" height="10" viewBox="0 0 10 10" className="ml-[29px]" fill="none" stroke="#fff">
            <path d="M.5 2.500h7v7h-7zM2.500 2.500v-2h7v7h-2" />
          </svg>
          <svg width="10" height="10" viewBox="0 0 10 10" className="ml-[28px]" fill="none" stroke="#fff">
            <path d="M.5.5l9 9M9.500.5l-9 9" />
          </svg>
        </div>
      </div>

      {/* Tabs */}
      <div className="flex h-[27px] shrink-0 items-end bg-[#217346] text-[10.500px] text-[#e8f2ec]">
        {tabs.map(([t, w]) => (
          <div
            key={t}
            className={`flex items-center justify-center leading-none ${w} ${
              t === '插入' ? 'h-[25px] bg-[#f3f3f3] text-[#217346]' : 'h-[27px]'
            }`}
          >
            {t}
          </div>
        ))}
        <div className="flex h-[27px] items-center pl-[13px]">
          <svg width="12" height="16" viewBox="0 0 12 16" fill="none" stroke="#e8f2ec">
            <path d="M4 12c0-2-3-3-3-6.500a5 5 0 0 1 10 0C11 9 8 10 8 12zM4.500 14h3" />
          </svg>
          <span className="ml-[10px] leading-none">操作说明搜索</span>
        </div>
        <div className="flex h-[27px] flex-1 items-center justify-end pr-[19px]">
          <svg width="13" height="15" viewBox="0 0 13 15" fill="none" stroke="#e8f2ec">
            <path d="M1 14c0-3 2-5 3-5.500-3-3-1-8 2.500-8S12 5 9.500 8.500M8 12h4.500M10.300 9.500v5" />
          </svg>
          <span className="ml-[3px] leading-none">共享</span>
        </div>
      </div>

      {/* Ribbon */}
      <div className="relative flex h-[78px] shrink-0 bg-[#f3f3f3] pt-[3px]">
        <Group width="w-[137px]" label="表格" pad="pl-[4px]">
          <RibbonBtn width="w-[40px]" icon={<IcoPivot />} lines={['数据', '透视表']} />
          <RibbonBtn width="w-[50px]" icon={<IcoRecPivot />} lines={['推荐的', '数据透视表']} />
          <RibbonBtn width="w-[38px]" icon={<IcoTable />} lines={['表格']} />
        </Group>
        <Group width="w-[155px]" label="" pad="pl-[6px]">
          <RibbonBtn width="w-[36px]" icon={<IcoPicture />} lines={['图片']} caret />
          <RibbonBtn width="w-[35px]" icon={<IcoShapes />} lines={['形状']} caret active />
          <div className="flex flex-col gap-[3px] pt-[2px] pl-[2px]">
            <div className="flex h-[15px] items-center gap-[2px] leading-none">
              <IcoSmartArt />
              <span className="text-[10.500px]">SmartArt</span>
            </div>
            <div className="flex h-[15px] items-center gap-[2px] leading-none">
              <IcoShot />
              <span>屏幕截图</span>
              <Caret />
            </div>
          </div>
        </Group>
        <Group width="w-[243px]" label="加载项" pad="pl-[9px]">
          <div className="flex w-[83px] shrink-0 flex-col gap-[10px] pt-[9px]">
            <div className="flex h-[15px] items-center gap-[1px] leading-none">
              <IcoGetAddin />
              <span>获取加载项</span>
            </div>
            <div className="flex h-[15px] items-center gap-[1px] leading-none">
              <IcoMyAddin />
              <span>我的加载项</span>
              <div className="ml-[6px]">
                <Caret />
              </div>
            </div>
          </div>
          <RibbonBtn width="w-[54px]" icon={<IcoVisio />} lines={['Visio Data', 'Visualizer']} />
          <div className="flex flex-col gap-[11px] pt-[9px] pl-[2px]">
            <div className="flex h-[15px] items-center gap-[2px] text-[10.500px] leading-none">
              <IcoBing />
              Bing Maps
            </div>
            <div className="flex h-[15px] items-center gap-[2px] text-[10.500px] leading-none">
              <IcoPeople />
              People Graph
            </div>
          </div>
        </Group>
        <Group width="w-[185px]" label="图表" pad="pl-[3px]" labelCls="pr-[14px]" launcher>
          <RibbonBtn width="w-[42px]" icon={<IcoRecChart />} lines={['推荐的', '图表']} />
          <div className="grid h-[57px] w-[80px] shrink-0 grid-cols-3 gap-y-[5px] pt-[5px] pl-[1px]">
            {[0, 1, 2, 3, 4, 5, 6, 7].map((k) => (
              <div key={k} className="flex h-[14px] items-center gap-[2px]">
                <MiniChart kind={k} />
                <Caret />
              </div>
            ))}
          </div>
          <RibbonBtn width="w-[54px]" icon={<IcoPivotChart />} lines={['数据透视图']} caret />
        </Group>
        <Group width="w-[48px]" label="演示" pad="pl-[4px]">
          <RibbonBtn width="w-[40px]" icon={<Ico3D />} lines={['三维地', '图']} inlineCaret />
        </Group>
        <Group width="w-[119px]" label="迷你图" pad="pl-[8px]">
          <RibbonBtn width="w-[34px]" icon={<IcoSpark kind="line" />} lines={['折线']} />
          <RibbonBtn width="w-[35px]" icon={<IcoSpark kind="col" />} lines={['柱形']} />
          <RibbonBtn width="w-[36px]" icon={<IcoSpark kind="win" />} lines={['盈亏']} />
        </Group>
        <Group width="w-[83px]" label="筛选器" pad="pl-[8px]">
          <RibbonBtn width="w-[34px]" icon={<IcoSlicer />} lines={['切片器']} />
          <RibbonBtn width="w-[34px]" icon={<IcoTimeline />} lines={['日程表']} />
        </Group>
        <Group width="w-[48px]" label="链接" pad="pl-[7px]">
          <RibbonBtn width="w-[34px]" icon={<IcoLink />} lines={['链', '接']} />
        </Group>
        <Group width="w-[207px]" label="文本" pad="pl-[5px]">
          <RibbonBtn width="w-[40px]" icon={<IcoTextbox />} lines={['文本框']} caret />
          <RibbonBtn width="w-[50px]" icon={<IcoHeader />} lines={['页眉和页脚']} />
          <RibbonBtn width="w-[40px]" icon={<IcoWordArt />} lines={['艺术字']} caret />
          <RibbonBtn width="w-[34px]" icon={<IcoSign />} lines={['签名行']} caret />
          <RibbonBtn width="w-[34px]" icon={<IcoObject />} lines={['对象']} />
        </Group>
        <Group width="w-[83px]" label="符号" pad="pl-[7px]">
          <RibbonBtn
            width="w-[34px]"
            icon={<span className="-translate-y-[7px] font-['Liberation_Serif',serif] text-[38px] leading-[22px] font-bold text-[#4f81b5]">π</span>}
            lines={['公式']}
            caret
          />
          <RibbonBtn
            width="w-[36px]"
            icon={<span className="-translate-y-[4px] font-['Liberation_Serif',serif] text-[34px] leading-[22px] font-bold text-[#4f81b5]">Ω</span>}
            lines={['符号']}
          />
        </Group>
        <div className="flex flex-1 items-end justify-end pr-[6px] pb-[1px]">
          <svg width="9" height="5" viewBox="0 0 9 5" fill="none" stroke="#777">
            <path d="M.5 4.500l4-4 4 4" />
          </svg>
        </div>
      </div>
      <div className="h-[11px] shrink-0 bg-[#e6e6e6]" />

      {/* Formula bar */}
      <div className="flex h-[58px] shrink-0 items-start pr-[4px] pl-[4px]">
        <div className="flex h-[21px] w-[85px] items-center justify-between border border-[#d0d0d0] bg-white pr-[5px] pl-[5px] font-['Liberation_Sans',sans-serif] text-[11px] text-[#555]">
          Q10
          <Caret color="#777" />
        </div>
        <div className="mt-[5px] ml-[11px] flex h-[11px] w-[15px] flex-col gap-[3px]">
          <div className="h-px w-px bg-[#999]" />
          <div className="h-px w-px bg-[#999]" />
          <div className="h-px w-px bg-[#999]" />
        </div>
        <div className="flex h-[58px] flex-1 items-start justify-between border border-[#d4d4d4] bg-white pt-[7px] pr-[4px] pl-[10px]">
          <div className="flex items-center gap-[18px]">
            <svg width="9" height="9" viewBox="0 0 9 9" stroke="#c4c4c4" strokeWidth="1.400">
              <path d="M.5.5l8 8M8.500.5l-8 8" />
            </svg>
            <svg width="11" height="9" viewBox="0 0 11 9" fill="none" stroke="#c4c4c4" strokeWidth="1.400">
              <path d="M.5 4.500l3 3.500 7-7.500" />
            </svg>
          </div>
          <svg width="7" height="5" viewBox="0 0 7 5" className="mt-px">
            <path d="M0 4.500L3.500 0 7 4.500z" fill="#777" />
          </svg>
        </div>
      </div>
      <div className="h-[9px] shrink-0" />

      {/* Grid */}
      <div className="flex h-[616px] shrink-0">
        <div className="flex w-[1584px] shrink-0 flex-col">
          <div className="flex h-[15px] shrink-0 border-b border-[#9c9c9c]">
            <div className="flex w-6 shrink-0 items-end justify-end border-r border-[#c4c4c4] pr-[2px] pb-[1px]">
              <div className="h-0 w-0 border-t-[10px] border-l-[10px] border-t-transparent border-l-transparent [border-bottom:0_solid] [border-right:10px_solid_#b7b7b7]" />
            </div>
            {columns.map((c) => (
              <div
                key={c}
                className={`flex w-[60px] shrink-0 items-center justify-center border-r border-[#c4c4c4] font-['Liberation_Sans',sans-serif] text-[13px] leading-none text-[#666] ${
                  c === 'Q' ? 'border-b-2 border-b-[#217346] bg-[#d2d2d2] text-[#217346]' : ''
                }`}
              >
                <span className="translate-y-[2px]">{c}</span>
              </div>
            ))}
          </div>
          <div className="flex min-h-0 flex-1">
            <div className="flex w-6 shrink-0 flex-col border-r border-[#9c9c9c]">
              {rowNums.map((n) => (
                <div
                  key={n}
                  className={`flex flex-1 items-center justify-center border-b border-[#c4c4c4] font-['Liberation_Sans',sans-serif] text-[13px] leading-none text-[#666] ${
                    n === 10 ? 'border-r-2 border-r-[#217346] bg-[#d2d2d2] text-[#217346]' : ''
                  }`}
                >
                  <span className="translate-y-[2px]">{n}</span>
                </div>
              ))}
            </div>
            <div className="relative flex-1 bg-white">
              <div className="absolute top-[63px] left-[454px] h-[47px] w-[128px] rounded-[7px] border border-[#4f86bd] bg-[#5b9bd5]" />
              <div className="absolute top-[163px] left-[452px] h-[44px] w-[130px] border border-[#4f86bd] bg-[#5b9bd5]" />
              <svg className="absolute top-[259px] left-[446px]" width="142" height="78" viewBox="0 0 142 78">
                <path d="M1 39L71 1l70 38-70 38z" fill="#5b9bd5" stroke="#4f86bd" />
              </svg>
              <div className="absolute top-[276px] left-[712px] h-[43px] w-[130px] border border-[#4f86bd] bg-[#5b9bd5]" />
              <div className="absolute top-[389px] left-[452px] h-[42px] w-[130px] border border-[#4f86bd] bg-[#5b9bd5]" />
              <div className="absolute top-[485px] left-[453px] h-[46px] w-[127px] rounded-[7px] border border-[#4f86bd] bg-[#5b9bd5]" />
              <div className="absolute top-[142px] left-[959px] h-[17px] w-[61px] border-2 border-[#2f7d58]">
                <div className="absolute right-[-4px] bottom-[-4px] h-[5px] w-[5px] bg-[#217346]" />
              </div>
            </div>
          </div>
        </div>
        {/* Vertical scrollbar */}
        <div className="flex flex-1 flex-col pt-[2px] pr-[2px] pl-[2px]">
          <div className="flex h-3 shrink-0 items-center justify-center border border-[#c0c0c0] bg-white">
            <svg width="7" height="4" viewBox="0 0 7 4"><path d="M0 4L3.500 0 7 4z" fill="#666" /></svg>
          </div>
          <div className="h-[574px] shrink-0 border border-[#c0c0c0] bg-white" />
          <div className="flex-1 bg-[#d2d2d2]" />
          <div className="flex h-3 shrink-0 items-center justify-center border border-[#c0c0c0] bg-white">
            <svg width="7" height="4" viewBox="0 0 7 4"><path d="M0 0L3.500 4 7 0z" fill="#666" /></svg>
          </div>
        </div>
      </div>

      {/* Sheet tabs */}
      <div className="flex h-[23.600px] shrink-0 items-start border-t border-[#a8a8a8] bg-[#e6e6e6] font-['Open_Sans',sans-serif] text-[11px]">
        <div className="flex h-[21px] w-[85px] shrink-0 items-center border-r border-[#a8a8a8] pl-[22px]">
          <svg width="4" height="6" viewBox="0 0 4 6"><path d="M4 0L0 3l4 3z" fill="#c0c0c0" /></svg>
          <svg width="4" height="6" viewBox="0 0 4 6" className="ml-[20px]"><path d="M0 0l4 3-4 3z" fill="#c0c0c0" /></svg>
        </div>
        <div className="flex h-[18px] w-[57px] shrink-0 items-center justify-center self-start border-r border-[#a8a8a8] pb-[2px] leading-none text-[#555]">Sheet1</div>
        <div className="flex h-[18px] w-[57px] shrink-0 items-center justify-center self-start pb-[2px] leading-none text-[#555]">Sheet2</div>
        <div className="flex h-[21px] w-[58px] shrink-0 items-center justify-center border-x border-b-2 border-[#a8a8a8] border-b-[#217346] bg-white pb-[3px] leading-none font-medium text-[#217346]">Sheet3</div>
        <div className="ml-[26px] flex h-[21px] items-center pb-[2px]">
          <svg width="14" height="14" viewBox="0 0 14 14" fill="none" stroke="#7a7a7a">
            <circle cx="7" cy="7" r="6.300" />
            <path d="M7 3.500v7M3.500 7h7" strokeWidth="1.300" />
          </svg>
        </div>
        <div className="ml-auto flex h-[21px] items-center pr-[18px]">
          <div className="mr-[12px] flex flex-col gap-[2px]">
            <div className="h-px w-px bg-[#999]" />
            <div className="h-px w-px bg-[#999]" />
            <div className="h-px w-px bg-[#999]" />
            <div className="h-px w-px bg-[#999]" />
          </div>
          <div className="flex h-[11px] w-[607px] items-stretch border border-[#c0c0c0]">
            <div className="flex w-3 items-center justify-center border-r border-[#c0c0c0] bg-white">
              <svg width="4" height="6" viewBox="0 0 4 6"><path d="M4 0L0 3l4 3z" fill="#555" /></svg>
            </div>
            <div className="w-[559px] bg-white" />
            <div className="flex-1 bg-[#d2d2d2]" />
            <div className="flex w-3 items-center justify-center border-l border-[#c0c0c0] bg-white">
              <svg width="4" height="6" viewBox="0 0 4 6"><path d="M0 0l4 3-4 3z" fill="#555" /></svg>
            </div>
          </div>
        </div>
      </div>

      {/* Status bar */}
      <div className="flex h-[18px] shrink-0 items-center bg-[#f1f1f1] pl-[7px]">
        <svg width="11" height="12" viewBox="0 0 11 12">
          <rect x="0" y="0" width="5" height="3" fill="#555" />
          <path d="M0 4.500h11M0 7h11M0 9.500h11M2 4v7M5 4v7M8 4v7" stroke="#888" strokeDasharray="1 1" />
        </svg>
        <svg width="15" height="13" viewBox="0 0 15 13" className="ml-[14px]" fill="none" stroke="#555">
          <path d="M5 1a5.500 5.500 0 1 0 6 10" />
          <path d="M6 3l7 8M13 3l-7 8" strokeWidth="1.400" />
        </svg>
        <span className="ml-[2px] leading-none">辅助功能: 调查</span>
        <div className="ml-auto flex h-[18px] items-center pr-[5px]">
          <div className="flex h-[18px] w-[33px] items-center justify-center bg-[#c6c6c6]">
            <svg width="11" height="11" viewBox="0 0 11 11" fill="none" stroke="#666"><path d="M.5.5h10v10H.5zM3.800.5v10M7.200.5v10M.5 3.800h10M.5 7.200h10" /></svg>
          </div>
          <div className="flex w-[33px] items-center justify-center">
            <svg width="12" height="11" viewBox="0 0 12 11" fill="none" stroke="#666"><path d="M.5.5h11v10H.5zM3.500 2.500h5v6h-5zM5 4.500h2M5 6.500h2" /></svg>
          </div>
          <div className="flex w-[33px] items-center justify-center">
            <svg width="12" height="11" viewBox="0 0 12 11" fill="none" stroke="#666"><path d="M.5.5h11v10H.5zM.5 7.500h11M4 .5v7M8 .5v7" /></svg>
          </div>
          <div className="ml-[6px] h-px w-[6px] bg-[#555]" />
          <div className="relative ml-[5px] flex h-3 w-[83px] items-center">
            <div className="h-px w-full bg-[#a8a8a8]" />
            <div className="absolute left-[38px] h-[10px] w-[4px] bg-[#666]" />
          </div>
          <svg width="7" height="7" viewBox="0 0 7 7" className="ml-[3px]" stroke="#555"><path d="M3.500 0v7M0 3.500h7" /></svg>
          <span className="ml-[11px] font-['Liberation_Sans',sans-serif] text-[11px] leading-none">100%</span>
        </div>
      </div>

      {/* Windows taskbar, cut off by the screenshot */}
      <div className="flex flex-1 items-end overflow-hidden bg-[linear-gradient(90deg,#6d5750_0%,#927268_20%,#a98a84_45%,#a0807a_60%,#b39c8c_82%,#a68d7c_100%)] pl-[44px]">
        {taskIcons.map((c) => (
          <div key={c} className="flex h-full w-[51.500px] shrink-0 items-start justify-center border-r border-[#c8b5ac]/40 pt-[2px]">
            <div className="h-[5px] w-[16px] rounded-t-[5px]" style={{ background: c }} />
          </div>
        ))}
      </div>

      {/* Shapes gallery */}
      <div className="absolute top-[112px] left-[179px] z-20 flex h-[510px] w-[218px] flex-col border border-[#c6c6c6] bg-white pt-px shadow-[1px_2px_3px_rgba(0,0,0,0.25)]">
        <ShapeSection title="最近使用的形状" cls="h-[54px]" active={6} rows="dia rect round tb vtb line arrow rect ell round tri elbow elbowA r d free scrib arc" />
        <ShapeSection title="线条" cls="h-[37px]" rows="line arrow dbl elbow elbowA elbowD sc scA scD bump free scrib" />
        <ShapeSection title="矩形" cls="h-[37px]" rows="rect round s1 s2 s3 s4 s5 s6 s7" />
        <ShapeSection title="基本形状" cls="h-[86px]" rows="tb vtb ell tri rtTri para trap ddia p5 h6 o7 o8 o10 o12 pie chord tear frame hf ls diag cross plaque can cube bevel donut no arcB fold smile heart bolt sun moon cloud arc bp bcp lb rb lbc rbc" />
        <ShapeSection title="箭头总汇" cls="h-[70px]" rows="r l u d lr ud quad lru bent uturn lu bu cr cl cu cd str notch home chev cbr cbd cbl cbu udc qc circ" />
        <ShapeSection title="公式形状" cls="h-[37px]" rows="plus minus times div eq neq" />
        <ShapeSection title="流程图" cls="h-[70px]" rows="rect round dia para fPre fInt fDoc fMul fTerm fPrep fManI fManO fConn fOff fCard fTape fSum fOr fCol fSort fExt fMrg fStore fDelay fSeq fMag fDir fDisp" />
        <ShapeSection title="星与旗帜" cls="h-[53px]" rows="st4x st4y st4 st5 st6 st7 st8 st10 st12 st16 st24 st32 rib1 rib2 rib1 rib2 scrollV scrollH wave wave2" />
        <ShapeSection title="标注" cls="h-[53px]" rows="cR cRo cO cC cL1 cL2 cL3 cD1 cD2 cD3 cD1 cD2 cD3 bA1 bA2 bA3" />
        <div className="flex flex-1 items-end justify-end pr-[2px] pb-[2px]">
          <svg width="8" height="8" viewBox="0 0 8 8" fill="#a0a0a0">
            <rect x="6" y="0" width="1.500" height="1.500" />
            <rect x="3" y="3" width="1.500" height="1.500" />
            <rect x="6" y="3" width="1.500" height="1.500" />
            <rect x="0" y="6" width="1.500" height="1.500" />
            <rect x="3" y="6" width="1.500" height="1.500" />
            <rect x="6" y="6" width="1.500" height="1.500" />
          </svg>
        </div>
      </div>

      {/* Watermark */}
      <svg className="pointer-events-none absolute top-[700px] left-[1320px] z-30" width="100" height="100" viewBox="1320 700 100 100" fill="#fff" stroke="#e2e2e2" strokeWidth="1.500">
        <ellipse cx="1336" cy="738" rx="10" ry="14" transform="rotate(-12 1336 738)" />
        <ellipse cx="1357" cy="718" rx="10" ry="14" />
        <ellipse cx="1382" cy="720" rx="11" ry="14" transform="rotate(-8 1382 720)" />
        <ellipse cx="1398" cy="743" rx="11" ry="14" transform="rotate(12 1398 743)" />
        <path d="M1365 738c-8 0-12 8-18 14-7 7-11 13-11 22 0 12 9 18 20 18 6 0 6-3 10-3 4 0 6 3 13 3 12 0 19-7 19-17 0-9-6-15-13-22-6-6-10-15-20-15z" />
      </svg>
      <div className="pointer-events-none absolute top-[737px] left-[1230px] z-30 font-['Liberation_Sans',sans-serif] text-[62px] leading-none font-bold text-white [-webkit-text-stroke:1.500px_#e4e4e4]">Bai</div>
      <div className="pointer-events-none absolute top-[748px] left-[1343px] z-30 font-['Liberation_Sans',sans-serif] text-[36px] leading-none text-white [-webkit-text-stroke:1.500px_#e0e0e0]">du</div>
      <div className="pointer-events-none absolute top-[741px] left-[1413px] z-30 text-[47px] leading-none font-bold text-white [-webkit-text-stroke:1.500px_#e4e4e4]">经验</div>
      <div className="pointer-events-none absolute top-[799px] left-[1230px] z-30 font-['Liberation_Sans',sans-serif] text-[35px] leading-none text-white/70 [-webkit-text-stroke:1px_#e0e0e0]">jingyan.baidu.com</div>

      {/* Red annotation arrows */}
      <svg className="pointer-events-none absolute top-0 left-0 z-40" width="1600" height="873" viewBox="0 0 1600 873">
        <polygon points={arrowPoints(44, 250, 112, 43)} fill="#ec4a42" />
        <polygon points={arrowPoints(65, 268, 191, 102)} fill="#ec4a42" />
        <polygon points={arrowPoints(593, 222, 300, 148)} fill="#ec4a42" />
      </svg>
    </div>
  )
}
